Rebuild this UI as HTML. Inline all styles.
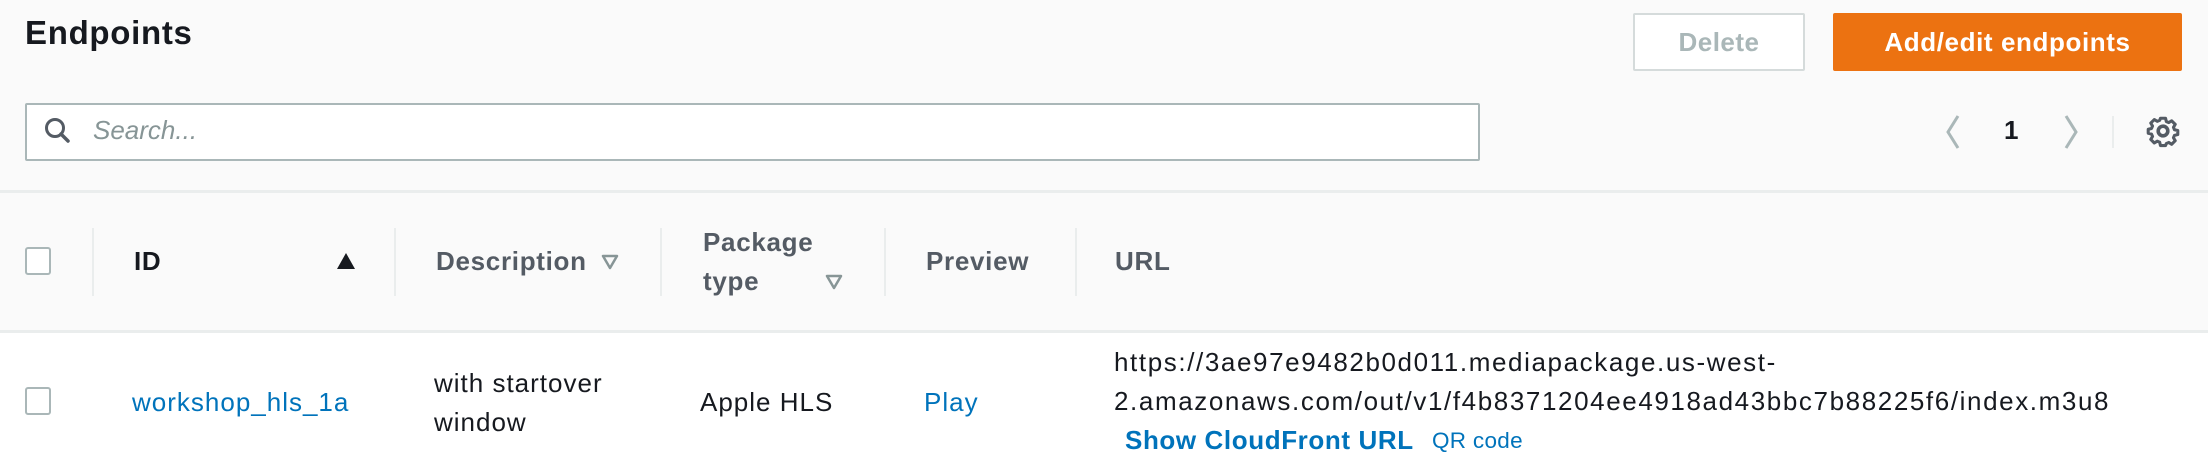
<!DOCTYPE html>
<html><head><meta charset="utf-8"><style>
body{margin:0;width:2208px;height:472px;background:#fafafa;font-family:"Liberation Sans",sans-serif;position:relative;overflow:hidden;color:#16191f}
.a{position:absolute;white-space:nowrap}
.h{font-weight:bold;color:#545b64;font-size:26px;letter-spacing:0.7px}
.t{font-size:26px;color:#16191f;letter-spacing:1px}
.l{color:#0073bb}
.cb{position:absolute;width:22px;height:24px;border:2px solid #aab7b8;border-radius:3px;background:#fff}
.div{position:absolute;top:228px;width:2px;height:68px;background:#eaeded}
</style></head><body>
<div class="a" style="left:25px;top:14px;font-size:33px;font-weight:bold;letter-spacing:0.7px">Endpoints</div>
<div class="a" style="left:1633px;top:13px;width:168px;height:54px;border:2px solid #d5dbdb;background:#fff;border-radius:2px;color:#aab7b8;font-weight:bold;font-size:26px;letter-spacing:0.5px;text-align:center;line-height:54px">Delete</div>
<div class="a" style="left:1833px;top:13px;width:349px;height:58px;background:#ec7211;border-radius:2px;color:#fff;font-weight:bold;font-size:26px;letter-spacing:0.6px;text-align:center;line-height:58px">Add/edit endpoints</div>
<div class="a" style="left:25px;top:103px;width:1451px;height:54px;border:2px solid #aab7b8;background:#fff;border-radius:2px"></div>
<svg class="a" style="left:43px;top:116px" width="30" height="30" viewBox="0 0 30 30"><circle cx="12" cy="12" r="8.5" fill="none" stroke="#545b64" stroke-width="3"/><path d="M18 18l7 7" stroke="#545b64" stroke-width="3.5" stroke-linecap="round"/></svg>
<div class="a" style="left:93px;top:115px;font-size:26px;font-style:italic;color:#879596">Search...</div>
<svg class="a" style="left:1940px;top:113px" width="26" height="38"><path d="M18 3L8 19l10 16" fill="none" stroke="#aab7b8" stroke-width="3"/></svg>
<div class="a" style="left:2004px;top:115px;font-size:26px;font-weight:bold">1</div>
<svg class="a" style="left:2058px;top:113px" width="26" height="38"><path d="M8 3l10 16L8 35" fill="none" stroke="#aab7b8" stroke-width="3"/></svg>
<div class="a" style="left:2112px;top:116px;width:2px;height:32px;background:#eaeded"></div>
<svg class="a" style="left:2145px;top:113px" width="36" height="36" viewBox="0 0 24 24"><path d="M10 2h4l.6 2.6 1.9.8 2.3-1.4 2.8 2.8-1.4 2.3.8 1.9L23.6 11.6v3.2l-2.6.6-.8 1.9 1.4 2.3-2.8 2.8-2.3-1.4-1.9.8L14 23.4h-4l-.6-2.6-1.9-.8-2.3 1.4-2.8-2.8 1.4-2.3-.8-1.9L.4 13.8v-3.2l2.6-.6.8-1.9L2.4 5.8l2.8-2.8 2.3 1.4 1.9-.8z" fill="none" stroke="#545b64" stroke-width="2.4" stroke-linejoin="round" transform="translate(12 12) scale(.85) translate(-12 -12)"/><circle cx="12" cy="12" r="3.2" fill="none" stroke="#545b64" stroke-width="2.4"/></svg>
<div class="a" style="left:0;top:190px;width:2208px;height:3px;background:#eaeded"></div>
<div class="a" style="left:0;top:330px;width:2208px;height:142px;background:#fff;border-top:3px solid #eaeded"></div>
<div class="cb" style="left:25px;top:247px"></div>
<div class="div" style="left:92px"></div><div class="div" style="left:394px"></div><div class="div" style="left:660px"></div><div class="div" style="left:884px"></div><div class="div" style="left:1075px"></div>
<div class="a h" style="left:134px;top:246px;color:#16191f">ID</div>
<svg class="a" style="left:336px;top:252px" width="20" height="18"><path d="M10 1L19 17H1z" fill="#16191f"/></svg>
<div class="a h" style="left:436px;top:246px">Description</div>
<svg class="a" style="left:601px;top:254px" width="18" height="16"><path d="M2 2h14L9 14z" fill="none" stroke="#879596" stroke-width="2.5" stroke-linejoin="round"/></svg>
<div class="a h" style="left:703px;top:227px">Package</div>
<div class="a h" style="left:703px;top:266px">type</div>
<svg class="a" style="left:825px;top:274px" width="18" height="16"><path d="M2 2h14L9 14z" fill="none" stroke="#879596" stroke-width="2.5" stroke-linejoin="round"/></svg>
<div class="a h" style="left:926px;top:246px">Preview</div>
<div class="a h" style="left:1115px;top:246px">URL</div>
<div class="cb" style="left:25px;top:387px"></div>
<div class="a t l" style="left:132px;top:387px">workshop_hls_1a</div>
<div class="a t" style="left:434px;top:364px;line-height:39px">with startover<br>window</div>
<div class="a t" style="left:700px;top:387px">Apple HLS</div>
<div class="a t l" style="left:924px;top:387px">Play</div>
<div class="a t" style="left:1114px;top:343px;line-height:39px;letter-spacing:1.6px">https://3ae97e9482b0d011.mediapackage.us-west-<br>2.amazonaws.com/out/v1/f4b8371204ee4918ad43bbc7b88225f6/index.m3u8</div>
<div class="a t l" style="left:1125px;top:425px;font-weight:bold;letter-spacing:0.6px">Show CloudFront URL</div>
<div class="a l" style="left:1432px;top:428px;font-size:22.5px;letter-spacing:0.3px">QR code</div>
</body></html>
